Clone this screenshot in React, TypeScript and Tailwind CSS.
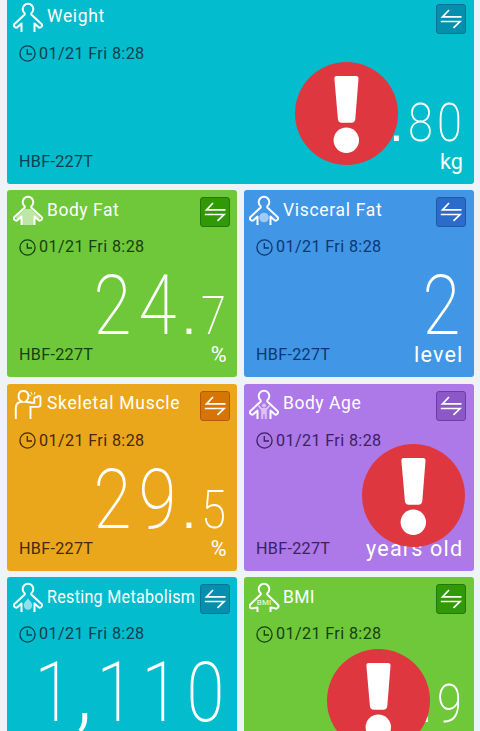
import type { ReactNode } from "react";
import clsx from "clsx";

type Theme = "teal" | "green" | "blue" | "orange" | "purple";
type Figure = "plain" | "fat" | "visceral" | "muscle" | "age" | "flame" | "bmi";

interface Metric {
  title: string;
  titleClass: string;
  theme: Theme;
  figure: Figure;
  whole: string;
  fraction?: string;
  unit?: string;
  unitClass?: string;
  wide?: boolean;
  alertClass?: string;
}

const THEMES: Record<Theme, { card: string; meta: string; button: string }> = {
  teal: { card: "bg-[#03bccd]", meta: "text-[#0d3f50]", button: "bg-[#058fae] border-[#0a7391]" },
  green: { card: "bg-[#6fc83a]", meta: "text-[#17400f]", button: "bg-[#2f9a04] border-[#28760b]" },
  blue: { card: "bg-[#4197e6]", meta: "text-[#0d3672]", button: "bg-[#2b6bcb] border-[#2257a8]" },
  orange: { card: "bg-[#eba71c]", meta: "text-[#46290b]", button: "bg-[#d67504] border-[#b3590e]" },
  purple: { card: "bg-[#ad78e7]", meta: "text-[#3c2160]", button: "bg-[#8c57c6] border-[#6a3f9f]" },
};

const METRICS: Metric[] = [
  { title: "Weight", titleClass: "text-[19px] tracking-[0.7px]", theme: "teal", figure: "plain", whole: "", fraction: "80", unit: "kg", wide: true, alertClass: "left-[288px] top-[65.5px]" },
  { title: "Body Fat", titleClass: "text-[19px] tracking-[0.6px]", theme: "green", figure: "fat", whole: "24", fraction: "7", unit: "%" },
  { title: "Visceral Fat", titleClass: "text-[19px] tracking-[0.75px]", theme: "blue", figure: "visceral", whole: "2", unit: "level", unitClass: "tracking-[1.2px]" },
  { title: "Skeletal Muscle", titleClass: "text-[19px] tracking-[0.8px]", theme: "orange", figure: "muscle", whole: "29", fraction: "5", unit: "%" },
  { title: "Body Age", titleClass: "text-[19px] tracking-[0.6px]", theme: "purple", figure: "age", whole: "", unit: "years old", unitClass: "tracking-[1.2px]", alertClass: "left-[118px] top-[60px]" },
  { title: "Resting Metabolism", titleClass: "text-[17.5px] tracking-[0.32px]", theme: "teal", figure: "flame", whole: "1,110" },
  { title: "BMI", titleClass: "text-[19px] tracking-[0.3px]", theme: "green", figure: "bmi", whole: "", fraction: "9", alertClass: "left-[83px] top-[72px]" },
];

const BODY =
  "M8.500 30V21.500L4.600 25a2.200 2.200 0 0 1-3.100-3.100L11.700 12.500V11.200a5.300 5.300 0 1 1 6.600 0V12.500L28.500 21.900a2.200 2.200 0 0 1-3.100 3.100L21.500 21.500V30";

function FigureIcon({ figure }: { figure: Figure }) {
  if (figure === "muscle") {
    return (
      <svg viewBox="0 0 31 31" className="h-[31px] w-[31px]" fill="none" stroke="white" strokeWidth="1.900">
        <path d="M2.800 30V19c0-4 1.600-6 6-6.300C4 10 4.500 2 10.300 2s6.800 7 2.200 10.700c3 .3 4.500 1 6.500 1h2.300V9.300c0-1.600 3-1.600 3 0V7.700c0-1.300 3.200-1 3.200.6v7c0 1.800-1 2.600-2.500 2.600h-7.500V30" />
        <path d="m16.200 6 2 1.300M18 3l1 2.500M22 3l-.8 2.500" strokeWidth="1" />
      </svg>
    );
  }
  return (
    <svg viewBox="0 0 31 31" className="h-[31px] w-[31px]" fill="none">
      {figure === "fat" && (
        <path d="M12 14 3 22.500l1 2 4.500-3V30h13v-8.500l4.500 3 1-2L18 14Z" fill="white" fillOpacity="0.55" />
      )}
      {figure === "visceral" && <circle cx="15" cy="22.500" r="4.800" fill="white" fillOpacity="0.5" />}
      {figure === "flame" && (
        <path d="M15 16c1 2.500 4.200 4 4.200 7.500a4.200 4.200 0 0 1-8.400 0C10.800 20 14 18.500 15 16Z" fill="white" fillOpacity="0.55" />
      )}
      {figure === "age" && (
        <g fill="white" fillOpacity="0.55">
          <circle cx="15" cy="16.500" r="2" />
          <path d="m9.800 16 3.200 3h4l3.200-3 1 1.200-3.400 4V30h-2v-4.500h-1.600V30h-2v-8.800l-3.400-4Z" />
        </g>
      )}
      {figure === "bmi" ? (
        <>
          {/* torso lines stop short to leave room for the label */}
          <path
            d="M8.500 30V25.500L4.600 26a2.200 2.200 0 0 1-3.100-3.800L11.700 12.500V11.200a5.300 5.300 0 1 1 6.600 0V12.500L28.500 22.200a2.200 2.200 0 0 1-3.100 3.800L21.500 25.500V30"
            stroke="white"
            strokeWidth="2"
            strokeLinejoin="round"
          />
          <text x="15" y="23" textAnchor="middle" fontSize="8" fontWeight="500" fill="white" fillOpacity="0.8">
            BMI
          </text>
        </>
      ) : (
        <path d={BODY} stroke="white" strokeWidth="2" strokeLinejoin="round" />
      )}
    </svg>
  );
}

function SwapButton({ className }: { className: string }) {
  return (
    <button className={clsx("absolute right-[7.500px] top-[7px] h-[30px] w-[30px] rounded-[3px] border", className)}>
      <svg viewBox="0 0 28 28" className="h-full w-full" fill="none" stroke="white" strokeWidth="1.700">
        <path d="M24.500 11.800H5.500L12 5M3.800 16.500H23l-6.500 6.300" />
      </svg>
    </button>
  );
}

function ClockIcon() {
  return (
    <svg viewBox="0 0 17 17" className="h-[17px] w-[17px]" fill="none" stroke="currentColor" strokeWidth="1.300">
      <circle cx="8.500" cy="8.500" r="7.600" />
      <path d="M8.300 4v5h4.700" />
    </svg>
  );
}

function AlertBadge({ className }: { className: string }) {
  return (
    <svg viewBox="0 0 103 103" className={clsx("absolute h-[103px] w-[103px]", className)}>
      <circle cx="51.500" cy="51.500" r="51.500" fill="#df373f" />
      <path d="M42 14h19a2.500 2.500 0 0 1 2.500 2.700L60.300 57a4 4 0 0 1-4 3.700h-9.400a4 4 0 0 1-4-3.700L39.400 16.700A2.500 2.500 0 0 1 42 14Z" fill="white" />
      <circle cx="51.300" cy="78.200" r="12.700" fill="white" />
    </svg>
  );
}

function Cell({ className, children }: { className: string; children: ReactNode }) {
  return <span className={clsx("flex justify-center", className)}>{children}</span>;
}

function Reading({ whole, fraction }: { whole: string; fraction?: string }) {
  return (
    <div className={clsx("absolute right-[9.500px] flex h-[80px] items-baseline font-thin leading-[80px] text-white", whole ? "top-[76px]" : "top-[86.5px]")}>
      {whole.split("").map((ch, i) =>
        ch === "," ? (
          <Cell key={i} className="w-[17px] text-[84px] font-light">{ch}</Cell>
        ) : (
          <Cell key={i} className="w-[45px] scale-x-[0.82] text-[84px] font-extralight">{ch}</Cell>
        ),
      )}
      {fraction && <Cell className="w-[19px] font-['Liberation_Sans',sans-serif] text-[50px] font-normal">.</Cell>}
      {fraction?.split("").map((ch, i) => (
        <Cell key={i} className="w-[29px] scale-x-[0.84] text-[54px] font-extralight">{ch}</Cell>
      ))}
    </div>
  );
}

function MetricCard({ metric }: { metric: Metric }) {
  const theme = THEMES[metric.theme];
  return (
    <section className={clsx("relative h-[187px] rounded-[3px]", theme.card, metric.wide && "col-span-2")}>
      <header className="flex h-[41px] items-center pl-[5.500px] text-white">
        <FigureIcon figure={metric.figure} />
        <h2 className={clsx("-mt-[1.500px] ml-[3px] origin-left scale-x-[0.92] whitespace-nowrap", metric.titleClass)}>
          {metric.title}
        </h2>
      </header>
      <SwapButton className={theme.button} />

      <div className={clsx("mt-[6px] flex h-[20px] items-center gap-[3px] pl-[12px]", theme.meta)}>
        <ClockIcon />
        <span className="origin-left scale-x-[0.95] whitespace-nowrap text-[17px] tracking-[0.4px]">01/21 Fri 8:28</span>
      </div>

      <Reading whole={metric.whole} fraction={metric.fraction} />

      {metric.unit && (
        <footer className="mt-[85px] flex h-[24px] items-center justify-between pl-[12px] pr-[10.500px] leading-[24px]">
          <span className={clsx("mt-[2px] origin-left scale-x-[0.98] text-[16.500px] tracking-[0.3px]", theme.meta)}>HBF-227T</span>
          <span className={clsx("origin-right scale-x-[0.96] text-[22.500px] text-white", metric.unitClass)}>{metric.unit}</span>
        </footer>
      )}
      {metric.alertClass && <AlertBadge className={metric.alertClass} />}
    </section>
  );
}

export default function App() {
  return (
    <main className="h-[731px] w-[480px] overflow-hidden bg-[#edf3f7] font-['Roboto','Liberation_Sans',sans-serif]">
      <div className="-mt-[3.500px] ml-[7px] grid grid-cols-[230px_230px] gap-[6.500px]">
        {METRICS.map((metric) => (
          <MetricCard key={metric.title} metric={metric} />
        ))}
      </div>
    </main>
  );
}
